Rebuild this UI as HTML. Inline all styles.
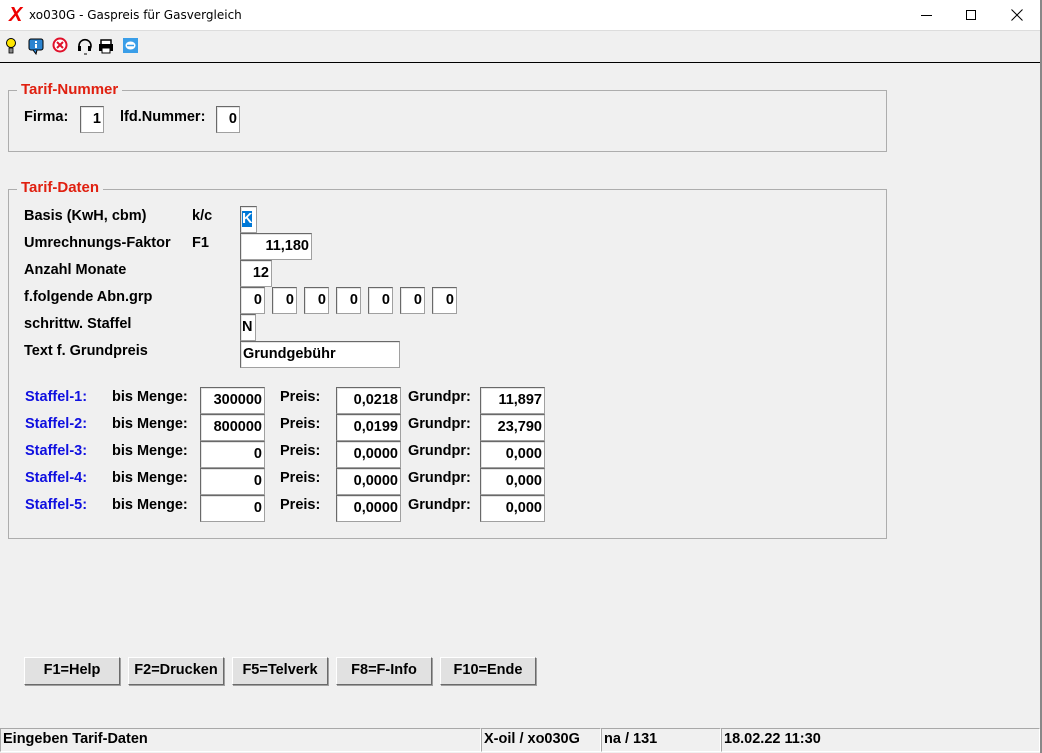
<!DOCTYPE html>
<html><head><meta charset="utf-8"><style>
*{margin:0;padding:0;box-sizing:border-box}
body{width:1042px;height:753px;background:#f0f0f0;position:relative;overflow:hidden;font-family:"Liberation Sans",Arial,sans-serif;font-weight:bold;font-size:14.5px;color:#000}
.a{position:absolute;white-space:nowrap}
.t{position:absolute;white-space:nowrap;line-height:16px}
.b{position:absolute;background:#fff;border:1px solid #a0a0a0;border-top-color:#696969;border-left-color:#696969;box-shadow:inset 1px 1px 0 #e3e3e3;text-align:right;padding-right:2px;line-height:25px;height:27px}
.fs{position:absolute;border:1px solid #adadad;border-right-color:#adadad}
.lg{position:absolute;color:#e02010;background:#f0f0f0;padding:0 4px;font-size:15px;line-height:16px}
.btn{position:absolute;top:657px;height:28px;width:96px;background:#e1e1e1;border:1px solid #fff;border-right-color:#6a6a6a;border-bottom-color:#6a6a6a;box-shadow:1px 1px 0 #a0a0a0;text-align:center;line-height:25px}
.s{position:absolute;top:728px;height:24px;border:1px solid #a8a8a8;border-right-color:#fff;border-bottom-color:#fff;line-height:21px;padding-left:2px}
.bl{color:#1010e0}
</style></head><body>
<div class="a" style="left:0;top:0;width:1042px;height:31px;background:#fff;border-bottom:1px solid #ddd"></div>
<div class="a" style="left:9px;top:4px;color:#e00;font-size:20px;font-weight:bold;font-style:italic;line-height:22px">X</div>
<div class="a" style="left:29px;top:8px;font-weight:normal;font-size:12px;font-family:'DejaVu Sans','Liberation Sans',sans-serif">xo030G - Gaspreis für Gasvergleich</div>
<div class="a" style="left:921px;top:15px;width:11px;height:1px;background:#000"></div>
<div class="a" style="left:966px;top:10px;width:10px;height:10px;border:1px solid #000"></div>
<svg class="a" style="left:1011px;top:9px" width="12" height="12"><path d="M0.5 0.5L11.5 11.5M11.5 0.5L0.5 11.5" stroke="#000"/></svg>
<div class="a" style="left:1040px;top:0;width:2px;height:753px;background:#888"></div>
<svg class="a" style="left:4px;top:37px" width="140" height="20">
<circle cx="7" cy="6" r="4.5" fill="#ffe600" stroke="#000"/><rect x="5" y="11" width="4" height="5" fill="#888" stroke="#000" stroke-width=".8"/>
<rect x="25" y="2" width="14" height="11" rx="2" fill="#2c84d0" stroke="#000"/><path d="M29 13l3 4 1-4" fill="#2c84d0" stroke="#000"/><rect x="31" y="4" width="2" height="2" fill="#fff"/><rect x="31" y="7" width="2" height="4" fill="#fff"/>
<circle cx="56" cy="8" r="6.5" fill="#fff" stroke="#e0102a" stroke-width="2"/><path d="M53 5l6 6M59 5l-6 6" stroke="#e0102a" stroke-width="2"/>
<path d="M76 12a6 6 0 1 1 10 0" fill="none" stroke="#000" stroke-width="1.6"/><rect x="74" y="9" width="3" height="5" fill="#000"/><rect x="84" y="9" width="3" height="5" fill="#000"/><path d="M80 17h3" stroke="#000"/>
<rect x="97" y="3" width="10" height="5" fill="#fff" stroke="#000" stroke-width="1.5"/><rect x="95" y="7" width="14" height="7" fill="#000"/><rect x="98" y="11" width="8" height="5" fill="#fff" stroke="#000"/>
<rect x="119" y="1" width="15" height="15" fill="#3a9ee8"/><ellipse cx="126.5" cy="8.5" rx="5" ry="4" fill="#fff"/><path d="M123 8.5h7" stroke="#3a9ee8" stroke-width="1.5"/>
</svg>
<div class="a" style="left:0;top:62px;width:1040px;height:1px;background:#000"></div>

<div class="fs" style="left:8px;top:90px;width:879px;height:62px"></div>
<div class="lg" style="left:17px;top:82px">Tarif-Nummer</div>
<div class="t" style="left:24px;top:109px">Firma:</div>
<div class="b" style="left:80px;top:106px;width:24px">1</div>
<div class="t" style="left:120px;top:109px">lfd.Nummer:</div>
<div class="b" style="left:216px;top:106px;width:24px">0</div>

<div class="fs" style="left:8px;top:189px;width:879px;height:350px"></div>
<div class="lg" style="left:17px;top:180px">Tarif-Daten</div>
<div class="t" style="left:24px;top:208px">Basis (KwH, cbm)</div><div class="t" style="left:192px;top:208px">k/c</div>
<div class="t" style="left:24px;top:235px">Umrechnungs-Faktor</div><div class="t" style="left:192px;top:235px">F1</div>
<div class="t" style="left:24px;top:262px">Anzahl Monate</div>
<div class="t" style="left:24px;top:289px">f.folgende Abn.grp</div>
<div class="t" style="left:24px;top:316px">schrittw. Staffel</div>
<div class="t" style="left:24px;top:343px">Text f. Grundpreis</div>
<div class="b" style="left:240px;top:206px;width:17px;text-align:left;padding-left:1px"><span style="background:#0078d7;color:#fff;line-height:16px;display:inline-block">K</span></div>
<div class="b" style="left:240px;top:233px;width:72px">11,180</div>
<div class="b" style="left:240px;top:260px;width:32px">12</div>
<div class="b" style="left:240px;top:287px;width:25px">0</div>
<div class="b" style="left:272px;top:287px;width:25px">0</div>
<div class="b" style="left:304px;top:287px;width:25px">0</div>
<div class="b" style="left:336px;top:287px;width:25px">0</div>
<div class="b" style="left:368px;top:287px;width:25px">0</div>
<div class="b" style="left:400px;top:287px;width:25px">0</div>
<div class="b" style="left:432px;top:287px;width:25px">0</div>
<div class="b" style="left:240px;top:314px;width:16px;text-align:left;padding-left:1px">N</div>
<div class="b" style="left:240px;top:341px;width:160px;text-align:left;padding-left:2px">Grundgebühr</div>

<div class="t bl" style="left:25px;top:389px">Staffel-1:</div><div class="t" style="left:112px;top:389px">bis Menge:</div><div class="b" style="left:200px;top:387px;width:65px">300000</div><div class="t" style="left:280px;top:389px">Preis:</div><div class="b" style="left:336px;top:387px;width:65px">0,0218</div><div class="t" style="left:408px;top:389px">Grundpr:</div><div class="b" style="left:480px;top:387px;width:65px">11,897</div>
<div class="t bl" style="left:25px;top:416px">Staffel-2:</div><div class="t" style="left:112px;top:416px">bis Menge:</div><div class="b" style="left:200px;top:414px;width:65px">800000</div><div class="t" style="left:280px;top:416px">Preis:</div><div class="b" style="left:336px;top:414px;width:65px">0,0199</div><div class="t" style="left:408px;top:416px">Grundpr:</div><div class="b" style="left:480px;top:414px;width:65px">23,790</div>
<div class="t bl" style="left:25px;top:443px">Staffel-3:</div><div class="t" style="left:112px;top:443px">bis Menge:</div><div class="b" style="left:200px;top:441px;width:65px">0</div><div class="t" style="left:280px;top:443px">Preis:</div><div class="b" style="left:336px;top:441px;width:65px">0,0000</div><div class="t" style="left:408px;top:443px">Grundpr:</div><div class="b" style="left:480px;top:441px;width:65px">0,000</div>
<div class="t bl" style="left:25px;top:470px">Staffel-4:</div><div class="t" style="left:112px;top:470px">bis Menge:</div><div class="b" style="left:200px;top:468px;width:65px">0</div><div class="t" style="left:280px;top:470px">Preis:</div><div class="b" style="left:336px;top:468px;width:65px">0,0000</div><div class="t" style="left:408px;top:470px">Grundpr:</div><div class="b" style="left:480px;top:468px;width:65px">0,000</div>
<div class="t bl" style="left:25px;top:497px">Staffel-5:</div><div class="t" style="left:112px;top:497px">bis Menge:</div><div class="b" style="left:200px;top:495px;width:65px">0</div><div class="t" style="left:280px;top:497px">Preis:</div><div class="b" style="left:336px;top:495px;width:65px">0,0000</div><div class="t" style="left:408px;top:497px">Grundpr:</div><div class="b" style="left:480px;top:495px;width:65px">0,000</div>

<div class="btn" style="left:24px">F1=Help</div>
<div class="btn" style="left:128px">F2=Drucken</div>
<div class="btn" style="left:232px">F5=Telverk</div>
<div class="btn" style="left:336px">F8=F-Info</div>
<div class="btn" style="left:440px">F10=Ende</div>

<div class="s" style="left:0;width:481px">Eingeben Tarif-Daten</div>
<div class="s" style="left:481px;width:120px">X-oil / xo030G</div>
<div class="s" style="left:601px;width:120px">na / 131</div>
<div class="s" style="left:721px;width:319px">18.02.22 11:30</div>
</body></html>
